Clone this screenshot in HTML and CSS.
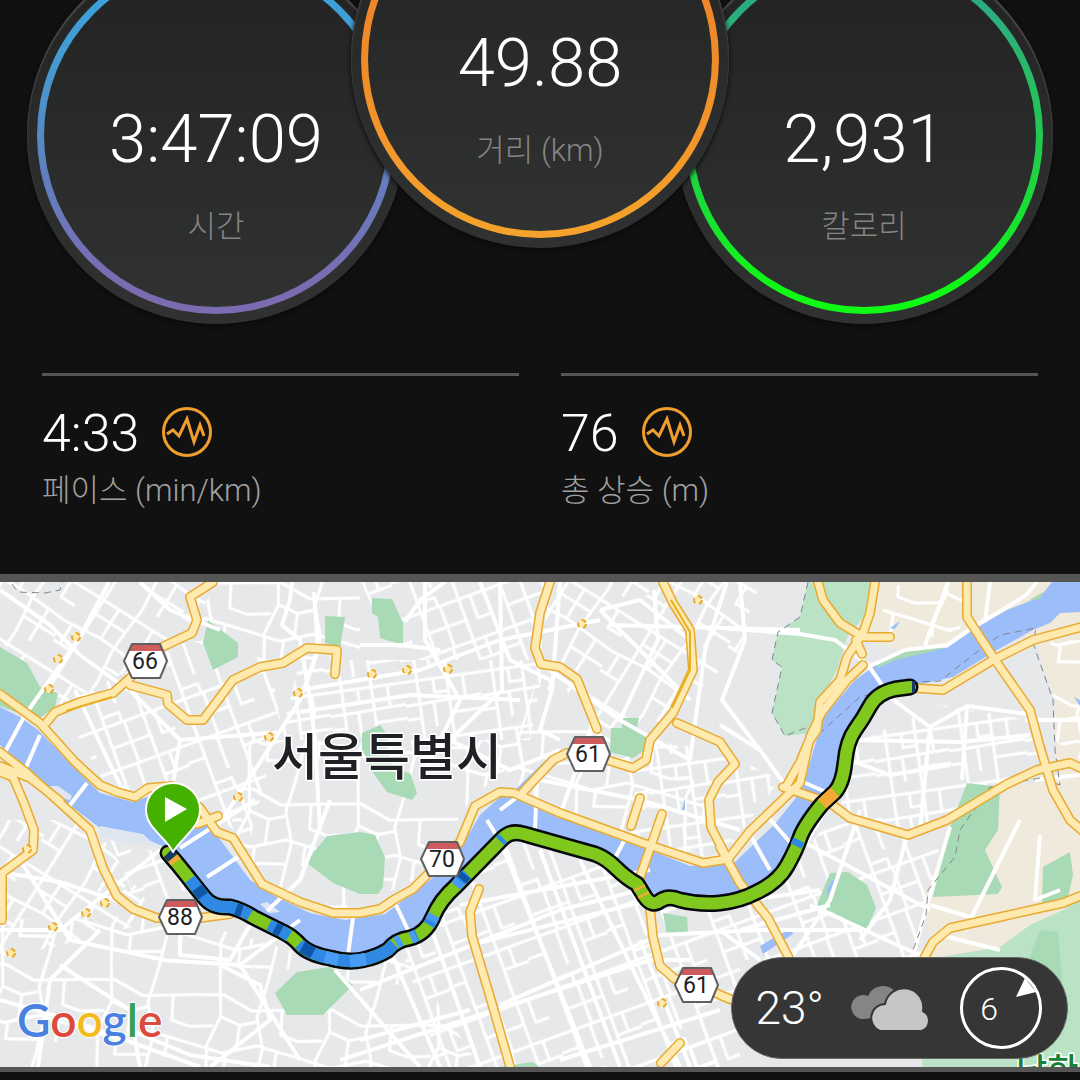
FILE: index.html
```html
<!DOCTYPE html>
<html lang="ko">
<head>
<meta charset="utf-8">
<meta name="viewport" content="width=device-width, initial-scale=1">
<title>활동 요약</title>
<link rel="stylesheet" href="styles.css">
</head>
<body>
<main class="activity">
  <section class="dials">
    <div class="dial dial-time">
      <div class="dial-ring"><div class="dial-face">
        <span class="dial-value">3:47:09</span>
        <span class="dial-label">시간</span>
      </div></div>
    </div>
    <div class="dial dial-distance">
      <div class="dial-ring"><div class="dial-face">
        <span class="dial-value">49.88</span>
        <span class="dial-label">거리 (km)</span>
      </div></div>
    </div>
    <div class="dial dial-calories">
      <div class="dial-ring"><div class="dial-face">
        <span class="dial-value">2,931</span>
        <span class="dial-label">칼로리</span>
      </div></div>
    </div>
  </section>

  <section class="stats">
    <div class="stat">
      <div class="stat-row">
        <span class="stat-value">4:33</span>
        <svg class="stat-icon" viewBox="0 0 50 50" aria-hidden="true"><circle cx="25" cy="25" r="23.5"/><path d="M5 27l6-4 6 6 8-17 7 23 6-17 4 11"/></svg>
      </div>
      <span class="stat-label">페이스 (min/km)</span>
    </div>
    <div class="stat">
      <div class="stat-row">
        <span class="stat-value">76</span>
        <svg class="stat-icon" viewBox="0 0 50 50" aria-hidden="true"><circle cx="25" cy="25" r="23.5"/><path d="M5 27l6-4 6 6 8-17 7 23 6-17 4 11"/></svg>
      </div>
      <span class="stat-label">총 상승 (m)</span>
    </div>
  </section>

  <section class="map">
    <svg class="map-canvas" viewBox="0 582 1080 485" role="img" aria-label="경로 지도">
      <defs>
        <pattern id="mesh-a" width="96" height="88" patternUnits="userSpaceOnUse" patternTransform="rotate(32)">
          <path d="M0 14H96M0 52L40 48 96 52M22 0V88M60 0L56 50 60 88M0 74H22M22 30H58M40 14V48M76 52V88M58 70H96M80 14V34H96M8 52V74"/>
        </pattern>
        <pattern id="mesh-b" width="84" height="100" patternUnits="userSpaceOnUse" patternTransform="rotate(-20)">
          <path d="M0 20H84M0 64H84M18 0V100M58 0V100M18 42H58M38 20V64M58 84H84M70 64V84M0 82H18M36 64V100M70 20V44H84M18 10H36V20"/>
        </pattern>
        <pattern id="mesh-c" width="110" height="104" patternUnits="userSpaceOnUse" patternTransform="rotate(8)">
          <path d="M0 22L30 18 60 30 110 22M0 70L36 76 70 64 110 70M24 0L30 40 20 70 24 104M72 0L66 36 76 66 72 104M30 40L50 46 68 40M50 46V70M90 24L92 50 110 54M0 54L24 50M40 76V92L72 88M90 68V88"/>
        </pattern>
        <pattern id="mesh-d" width="76" height="60" patternUnits="userSpaceOnUse" patternTransform="rotate(-8)">
          <path d="M0 12H76M0 36L76 34M14 0V60M44 0V60M60 12V36M28 36V60M0 50H14M44 48H76M30 12V26H44"/>
        </pattern>

        <g id="highways">
          <path d="M0 694L40 723 75 762 100 785 117 792 135 797 148 788 172 786 200 808 217 832 233 838 248 862 262 884 300 902 333 913 360 913 380 909 395 899 413 889 430 872 460 842 475 806 500 792 514 793 560 813 643 843 703 863 728 859 750 831 800 783 810 737 822 712 847 680 863 665"/>
          <path d="M0 752L27 773 58 801 90 830 103 868 117 896 133 909 157 918 200 918 230 914"/>
          <path d="M213 582L190 597 197 620 192 633 160 648 130 678 113 693 80 702 55 712 47 722"/>
          <path d="M130 685L167 695 168 704 187 720 203 720 233 680 260 667 283 663 307 648 337 650 335 674"/>
          <path d="M0 772L13 777 24 803 34 830 33 850 2 873V920M0 766L30 778 60 801"/>
          <path d="M550 582L540 613 535 648 541 664 560 667 577 679 597 729"/>
          <path d="M663 582L673 603 690 630 693 670 673 713 650 740 646 760 633 768 607 760 588 752 567 753 553 760 523 792"/>
          <path d="M677 723L720 742 735 764 718 782 709 800 711 827 727 858"/>
          <path d="M640 798L631 826M662 814L638 883"/>
          <path d="M818 582L823 600 840 623 863 637 890 637M875 582L870 613 863 633 847 657 840 680 820 702 817 730 808 743 800 762 787 785M856 640L862 654"/>
          <path d="M967 582V617L993 657 1030 710 1040 747 1053 790 1070 820 1085 833"/>
          <path d="M1085 626L1033 640 993 660 943 690 915 688"/>
          <path d="M783 787L830 803 850 818 908 835 947 820 1007 784 1037 770 1070 763 1085 770"/>
          <path d="M1085 894L1063 903 1000 917 950 928 933 942 922 962"/>
          <path d="M720 847L740 883 768 918 790 960"/>
          <path d="M479 889L470 912 472 936 493 1007 511 1070"/>
          <path d="M650 908L653 937 660 966 675 979 696 982 720 995 742 1004"/>
          <path d="M680 1043L661 1063M197 824L218 816"/>
        </g>
        <path id="track" d="M168 853Q178 864 188 877T204 897Q212 908 230 907Q242 910 253 917L283 932Q292 936 300 945T330 958Q347 963 362 960T388 950Q396 940 410 938Q426 934 433 917T456 886L503 838Q511 830 524 834L570 847 595 854Q606 858 616 868T637 884L645 897Q652 907 660 901T680 900Q700 905 720 903T757 892Q778 882 787 866T800 838T822 804L835 792Q843 783 845 762T855 730T870 706T895 689L910 687"/>
        <g id="shield">
          <path class="shield-plate" d="M-13 -17H15L22 0 15 17H-13L-21 0Z"/>
          <path class="shield-band" d="M-13 -17H15L18 -10H-16Z"/>
          <path class="shield-edge" d="M-13 -17H15L22 0 15 17H-13L-21 0Z"/>
        </g>
      </defs>

      <rect class="land" y="582" width="1080" height="485"/>

      <path class="sand" d="M860 640L880 582H1080V1067H930L930 950 925 895 950 827 1000 787 1055 780 1056 740 1050 700 1040 650 1032 636 900 650Z"/>
      <path class="land" d="M915 690L1032 640 1056 700 1053 745 1059 780 1000 787 965 784 948 826 925 890H860V700Z"/>

      <path class="mesh mesh-a" d="M0 582H215L190 640 60 705 0 640Z"/>
      <path class="mesh mesh-b" d="M60 705L190 640 270 660 280 720 250 840 165 786 110 792Z"/>
      <path class="mesh mesh-c" d="M215 582H360V670H280L190 640Z"/>
      <path class="mesh mesh-d" d="M300 660H545L530 740H280Z"/>
      <path class="mesh mesh-c" d="M250 740H540L470 800 420 880 340 910 260 880 230 830Z"/>
      <path class="mesh mesh-b" d="M360 582H550L540 660H400Z"/>
      <path class="mesh mesh-a" d="M550 582H760L740 650 670 720 600 730 540 660Z"/>
      <path class="mesh mesh-c" d="M540 670L600 730 670 730 730 860 640 840 500 790Z"/>
      <path class="mesh mesh-d" d="M640 740L720 750 780 780 720 860 630 840Z"/>
      <path class="mesh mesh-a" d="M0 820H90L160 920 0 960Z"/>
      <path class="mesh mesh-b" d="M110 840L170 855 210 910H140Z"/>
      <path class="mesh mesh-c" d="M0 920L170 915 340 965V1067H0Z"/>
      <path class="mesh mesh-c" d="M340 965L400 945 480 1067H340Z"/>
      <path class="mesh mesh-b" d="M400 945L510 835 600 857 650 905 720 1067H440Z"/>
      <path class="mesh mesh-b" d="M650 905L780 880 830 820 940 840 920 960H740V1067H690Z"/>
      <path class="mesh mesh-d" d="M850 745L940 705 1030 720 1050 770 910 830 840 810Z"/>
      <path class="mesh mesh-c" d="M885 585H965L960 630 880 650ZM1050 640H1080V760L1055 740Z"/>

      <g class="park">
        <path d="M0 647L27 663 40 687 58 693 55 707 40 718 0 692ZM0 698L20 714 0 706Z"/>
        <path d="M208 620L238 643V657L213 670 203 643ZM325 616L345 617 340 648 325 643Z"/>
        <path d="M372 598L392 599 403 623V645L380 638 378 617 372 613ZM362 733L380 725 386 733 392 770 410 773 417 793 412 800 387 792 373 773 362 748Z"/>
        <path d="M622 718H639L637 727 647 735 645 750 633 758 610 752 611 728H622Z"/>
        <path d="M327 836L360 832 375 835 385 857 383 887 378 894 360 894 333 883 307 863 314 852Z"/>
        <path d="M297 972L330 967 353 985 323 1015H287L275 993Z"/>
        <path d="M830 873L848 872 867 885 876 908 867 929 817 905ZM663 913L687 917 688 932 667 935Z"/>
        <path d="M967 783L1000 787 998 830 985 850 1002 887 998 894 933 897 950 827ZM1043 867L1070 852 1073 875 1068 897 1042 903Z"/>
      </g>
      <path class="park-pale" d="M808 582H878L867 613 847 637 837 670 817 707 812 733 785 736 772 713 782 667 772 660 778 632 800 617Z"/>
      <path class="park-pale" d="M1080 900L1063 910 1030 925 1000 947 922 960V1067H1080Z"/>
      <path class="park" d="M1040 930L1058 932 1064 1000 1050 1030 1025 970ZM500 1067L532 1062 540 1067Z"/>

      <g class="water">
        <path d="M0 707L20 717 38 730 77 770 100 793 133 802 150 796 185 800 205 822 222 842 250 880 275 896 310 913 345 920 385 914 430 880 455 858 480 815 500 797 515 797 620 838 690 866 735 862 775 824 802 790 815 745 825 715 855 680 872 668 878 660 903 650 947 648 973 630 1007 610 1040 597 1052 582H1080V612L1060 613 1050 623 1033 630 997 650 953 677 917 685 890 692 866 706 852 735 838 785 820 800 800 838 783 870 750 893 693 900 650 900 630 880 600 857 520 832 502 837 470 868 440 902 420 930 395 945 360 960 330 955 300 940 250 915 212 903 177 862 165 847 143 838 100 828 67 803 33 777 0 745Z"/>
        <path d="M515 790L548 758 556 757 525 795ZM682 810L685 798V810ZM890 628L900 621 895 629ZM760 946L791 928 793 934 763 954ZM827 890L832 880 835 881 828 896ZM1074 697L1080 700V706Z"/>
      </g>
      <path class="park" d="M877 663L903 650 945 648 925 653 895 660 878 668ZM1028 601L1043 592 1040 599Z"/>
      <path class="island" d="M50 786L58 786 72 796 70 800 62 798ZM260 904L267 902 280 912 270 913ZM100 826L143 834 155 845 120 842 100 835Z"/>

      <g class="street-main">
        <path d="M109 582L78 640 25 715 5 752M0 590L50 625 80 655 128 690M40 735L24 772M87 783L67 809M140 582L170 610 220 630M75 690L108 760 125 795M130 690L180 740 270 733M180 740L172 790"/>
        <path d="M292 582L290 600 282 625 300 640 310 700 315 740 320 830M330 800L300 880 267 911M314 592L318 650 300 700 255 770 215 830M255 800L180 848M238 857L207 877"/>
        <path d="M405 622L420 600 445 582M360 645L400 645 440 650M300 690L420 670 500 640 600 620M300 712L410 695 520 700M425 582V640L460 700 430 760M500 582L502 690 450 740 510 770 560 750"/>
        <path d="M480 582L510 660 550 680M560 582L552 690 540 730 560 740M540 663L620 720 690 760M600 610L690 700M610 625L800 630M654 590L658 640 620 720M690 640L640 600 600 610M727 582L705 650 690 760M560 815L590 730M500 810L540 780 640 800 740 830M537 780L535 830M487 820L498 838M353 918L348 955M396 905L408 930M627 835L614 860M752 838L770 870M769 818L795 848M803 782L828 793M866 662L884 688"/>
        <path d="M720 628L800 634 835 640 870 666 905 650 947 645 973 627 1007 607 1026 595M720 725L760 750 785 785M740 582L745 640 722 700 760 750M880 690L930 727 967 706 1035 715M930 727L920 830M967 706L962 780M850 740L960 742 1030 735M850 760L890 775 950 765M1035 780L1080 775M990 582L985 622M1026 595L1037 582M948 582L925 645M1025 720H1080"/>
        <path d="M0 872L60 882 130 905M20 860L70 940 165 960M0 930L60 930 160 850M38 1067L50 980 100 930M0 1000L70 1020 200 1067M60 965L130 1010 140 1067M160 960L240 965 300 1060M180 930L180 955 230 960 250 925M130 1030L190 1055 270 1067M240 965L300 920M210 1067L270 1020 260 985 220 965"/>
        <path d="M335 970L420 1067M360 990L560 910 640 890M340 1060L650 960 690 960M390 950L440 1067M430 925L480 1067M500 840L590 1067M540 850L620 1067M580 860L680 1067M460 905L650 870M470 945L650 900M500 1005L660 935M560 1060L720 1010M640 940L690 1067M660 935L760 930 860 930M360 1040L470 1010"/>
        <path d="M800 840L930 910M830 803L790 870M907 835L890 900 860 940M860 810L830 900 790 960M810 905L930 960M950 827L920 930 912 960M1020 820L965 930M930 905L980 920M940 935L1000 950M1040 835L1035 900 1060 890M750 900L820 890M740 930L830 905M760 960L720 930"/>
      </g>

      <g class="boundary">
        <path d="M808 582L800 617 778 632 772 660 782 667 772 713 785 736 813 725 820 733 860 697 918 682 940 681 973 655 1000 635 1036 628 1033 643 1053 700 1055 750 1060 785 1040 778 990 787 960 830 955 857 928 890 926 915 913 950M12 584L18 592 45 593 60 590 62 582"/>
      </g>

      <use class="highway-casing" href="#highways"/>
      <use class="highway-core" href="#highways"/>
      <path class="median" d="M671 600L690 632 690 670 672 708M66 711L112 697"/>
      <g class="junction">
        <circle cx="76" cy="637" r="4"/><circle cx="58" cy="659" r="4"/><circle cx="49" cy="689" r="4"/><circle cx="298" cy="693" r="4"/><circle cx="269" cy="737" r="4"/><circle cx="238" cy="797" r="4"/>
        <circle cx="372" cy="674" r="4"/><circle cx="407" cy="670" r="4"/><circle cx="448" cy="669" r="4"/><circle cx="582" cy="624" r="4"/><circle cx="698" cy="600" r="4"/><circle cx="27" cy="849" r="4"/>
        <circle cx="105" cy="903" r="4"/><circle cx="86" cy="913" r="4"/><circle cx="53" cy="927" r="4"/><circle cx="11" cy="953" r="4"/><circle cx="662" cy="1003" r="4"/>
      </g>

      <use class="track-edge" href="#track"/>
      <use class="track-green" href="#track"/>
      <g class="track-part">
        <path class="pace-slow" d="M168 853L173 858"/>
        <path class="pace-orange" d="M173 858L176 862"/>
        <path class="pace-blue" d="M190 879L204 897Q212 908 230 907Q242 910 250 915M269 925L283 932 289 936M299 944Q310 955 330 958Q347 963 362 960T388 950L394 944M412 937L417 935M429 925L434 916M458 883L467 874M500 841L503 838M796 846L799 840"/>
        <path class="pace-light" d="M396 943L401 940M411 938L416 936M431 921L434 915M456 886L460 881M325 957L338 960M350 961L366 959"/>
        <path class="pace-deep" d="M197 888L203 896M236 909L242 911M275 928L281 931M302 947L313 953M462 880L466 875"/>
        <path class="pace-orange" d="M639 887L640 889M643 894L644 896M822 804L835 792"/>
        <path class="pace-slow" d="M912 687L915 687"/>
      </g>

      <g class="pin">
        <path class="pin-body" d="M173 852C166 837 146 828 146 810A27 27 0 0 1 200 810C200 828 182 837 173 852Z"/>
        <path class="pin-play" d="M165 797L187 809 165 822Z"/>
      </g>

      <g class="shields">
        <g transform="translate(145 661)"><use href="#shield"/><text y="8">66</text></g>
        <g transform="translate(588 754)"><use href="#shield"/><text y="8">61</text></g>
        <g transform="translate(442 859)"><use href="#shield"/><text y="8">70</text></g>
        <g transform="translate(180 917)"><use href="#shield"/><text y="8">88</text></g>
        <g transform="translate(696 985)"><use href="#shield"/><text y="8">61</text></g>
      </g>

      <text class="city" x="387" y="775">서울특별시</text>
      <text class="park-name" x="1016" y="1083">남한</text>
      <text class="brand" x="17" y="1037"><tspan class="brand-blue">G</tspan><tspan class="brand-red">o</tspan><tspan class="brand-yellow">o</tspan><tspan class="brand-blue">g</tspan><tspan class="brand-green">l</tspan><tspan class="brand-red">e</tspan></text>
    </svg>

    <div class="weather">
      <span class="weather-temp">23°</span>
      <svg class="weather-clouds" viewBox="0 0 82 48" aria-label="흐림">
        <path class="cloud-back" d="M13 35A12 12 0 1 1 17 12 16 16 0 0 1 45 9L30 33Z"/>
        <path class="cloud-front" d="M29 47A14 14 0 0 1 34 20 19 19 0 0 1 72 27 11 11 0 0 1 71 47Z"/>
      </svg>
      <svg class="weather-wind" viewBox="0 0 82 82" aria-label="풍속">
        <circle cx="41" cy="41" r="39.500"/>
        <path d="M65 11L76 25 56 30Z"/>
        <text x="29" y="53">6</text>
      </svg>
    </div>
  </section>
</main>
</body>
</html>
```

FILE: styles.css
```css
* {
  box-sizing: border-box;
}

body {
  margin: 0;
  background: #111;
  color: #fff;
  font-family: Roboto, "Noto Sans CJK KR", sans-serif;
  font-weight: 300;
}

.activity {
  overflow: hidden;
}

/* Overlapping metric dials */
.dials {
  display: flex;
  justify-content: center;
  align-items: flex-start;
}

.dial {
  width: 35%;
  aspect-ratio: 1;
  margin-top: -5%;
  padding: 10px;
  border-radius: 50%;
  background: linear-gradient(#222, #2b2c2c 60%, #303131);
  box-shadow: inset 0 2px 2px #585858, 0 2px 5px #0a0a0a;
}

.dial-distance {
  z-index: 1;
  margin: -12% -5% 0;
}

.dial-ring {
  height: 100%;
  padding: 7px;
  border-radius: 50%;
}

.dial-time .dial-ring {
  background: linear-gradient(#36a4e0, #459bd0 30%, #5f80c0 60%, #7b6cb2 90%);
}

.dial-distance .dial-ring {
  background: linear-gradient(#ee7a28, #f08c2a 50%, #f5a32c);
}

.dial-calories .dial-ring {
  background: linear-gradient(#2ba68c, #2cb07a 20%, #22c850 50%, #0ffa14 95%);
}

.dial-face {
  display: flex;
  flex-direction: column;
  align-items: center;
  justify-content: center;
  gap: 28px;
  height: 100%;
  padding-top: 76px;
  border-radius: 50%;
  background: linear-gradient(#222, #292a2a 50%, #303131);
}

.dial-value {
  font-size: 67px;
  line-height: 80px;
}

.dial-label {
  color: #858585;
  font-size: 31px;
  line-height: 40px;
}

/* Summary figures */
.stats {
  display: grid;
  grid-template-columns: 1fr 1fr;
  gap: 42px;
  padding: 49px 42px 60px;
}

.stat {
  border-top: 3px solid #555;
  padding-top: 26px;
}

.stat-row {
  display: flex;
  align-items: center;
  gap: 23px;
  height: 64px;
}

.stat-value {
  font-size: 52px;
  line-height: 64px;
}

.stat-icon {
  width: 50px;
  height: 50px;
  margin-bottom: 4px;
  fill: none;
  stroke: #f09e2e;
  stroke-width: 3;
}

.stat-label {
  display: block;
  padding-top: 2px;
  color: #a0a0a0;
  font-size: 31px;
  line-height: 46px;
}

/* Route map */
.map {
  position: relative;
  border-top: 8px solid #555;
  border-bottom: 5px solid #555;
}

.map-canvas {
  display: block;
  width: 100%;
  height: auto;
  fill: none;
  stroke-linejoin: round;
}

.land { fill: #e6e8ea; }
.sand { fill: #f0eadd; }
.park { fill: #a8dab5; }
.park-pale { fill: #bae3c6; }
.water { fill: #9bbdfa; }
.island { fill: #dfe6f0; }

pattern path {
  stroke: #fff;
  stroke-width: 3;
}

.mesh-a { fill: url(#mesh-a); }
.mesh-b { fill: url(#mesh-b); }
.mesh-c { fill: url(#mesh-c); }
.mesh-d { fill: url(#mesh-d); }

.street-main {
  stroke: #fff;
  stroke-width: 4;
}

.boundary {
  stroke: #80868b;
  stroke-width: 1;
  stroke-dasharray: 7 5;
}

.highway-casing {
  stroke: #e8aa30;
  stroke-width: 10;
  stroke-linecap: round;
}

.highway-core {
  stroke: #fee9ae;
  stroke-width: 7;
  stroke-linecap: round;
}

.median {
  stroke: #e8b020;
  stroke-width: 2;
}

.junction {
  fill: #fee9ae;
  stroke: #e8aa30;
  stroke-width: 2;
  stroke-dasharray: 5 4;
}

.track-edge {
  stroke: #05080c;
  stroke-width: 17;
  stroke-linecap: round;
}

.track-green {
  stroke: #80c81e;
  stroke-width: 12;
  stroke-linecap: round;
}

.track-part { stroke-width: 12; }
.pace-blue { stroke: #2f88e4; }
.pace-light { stroke: #489cf6; }
.pace-deep { stroke: #0e57a8; }
.pace-slow { stroke: #173a62; }
.pace-orange { stroke: #f5a936; }

.pin-body {
  fill: #44b000;
  stroke: #fff;
  stroke-width: 2;
}

.pin-play { fill: #fff; }
.shield-plate { fill: #fff; }
.shield-band { fill: #cf5b5e; }

.shield-edge {
  stroke: #606060;
  stroke-width: 2;
}

.shields text {
  fill: #202124;
  font-size: 23px;
  font-weight: 400;
  text-anchor: middle;
}

.city {
  fill: #202124;
  stroke: #fff;
  stroke-width: 3;
  paint-order: stroke;
  font-family: "Noto Sans CJK KR", sans-serif;
  font-size: 50px;
  font-weight: 500;
  text-anchor: middle;
}

.park-name {
  fill: #188038;
  stroke: #fff;
  stroke-width: 3;
  paint-order: stroke;
  font-family: "Noto Sans CJK KR", sans-serif;
  font-size: 34px;
  font-weight: 500;
}

.brand {
  stroke: #fff;
  stroke-width: 2;
  paint-order: stroke;
  font-family: Lato, sans-serif;
  font-size: 46px;
  font-weight: 600;
}

.brand-blue { fill: #4a80e0; }
.brand-red { fill: #dc4a3e; }
.brand-yellow { fill: #f2bb1e; }
.brand-green { fill: #35a053; }

/* Weather badge over the map */
.weather {
  position: absolute;
  right: 12px;
  bottom: 8px;
  display: flex;
  align-items: center;
  gap: 27px;
  padding: 9px 25px 9px 24px;
  border: 1px solid #666;
  border-radius: 51px;
  background: #363636;
}

.weather-temp {
  font-size: 46px;
  line-height: 56px;
}

.weather-clouds {
  width: 82px;
  height: 48px;
}

.cloud-back { fill: #858585; }

.cloud-front {
  fill: #c6c6c6;
  stroke: #363636;
  stroke-width: 2;
}

.weather-wind {
  width: 82px;
  height: 82px;
}

.weather-wind circle {
  fill: none;
  stroke: #fff;
  stroke-width: 3;
}

.weather-wind path,
.weather-wind text {
  fill: #fff;
}

.weather-wind text {
  font-size: 32px;
  text-anchor: middle;
}
```
